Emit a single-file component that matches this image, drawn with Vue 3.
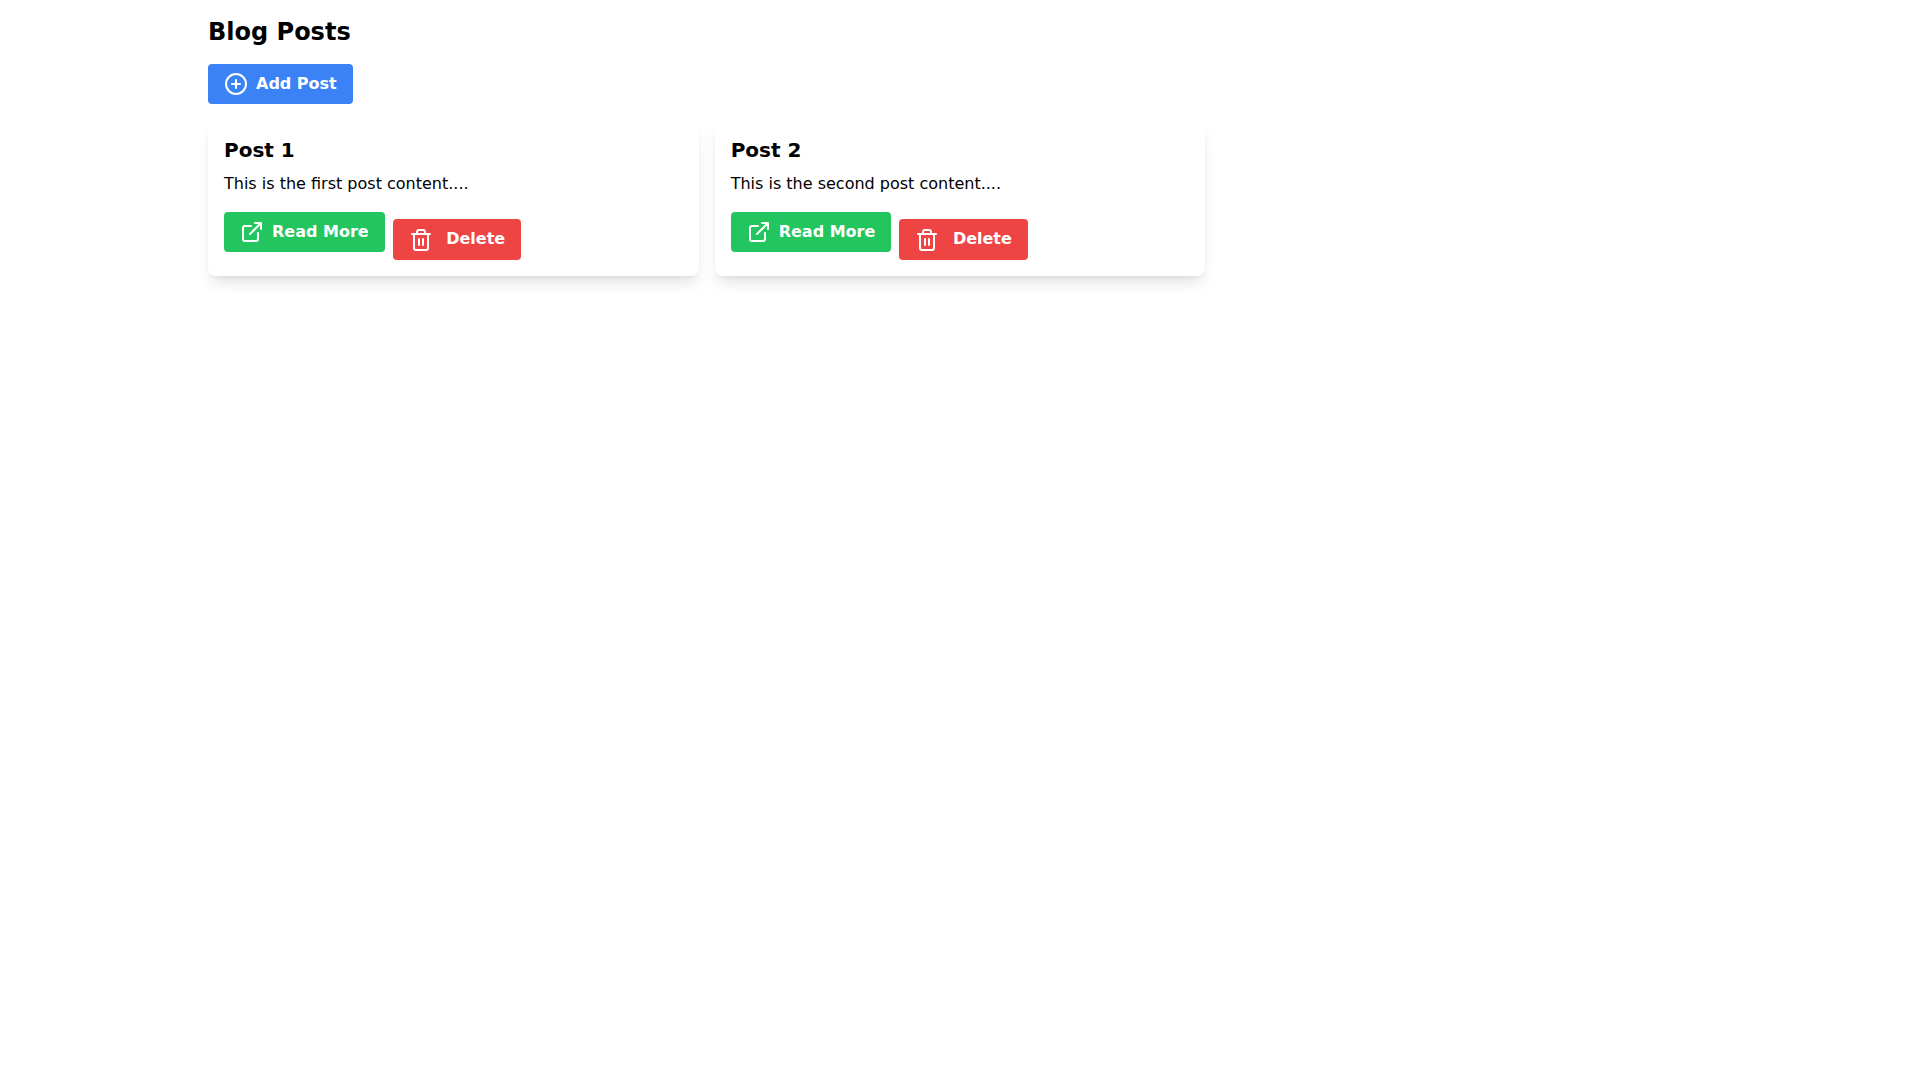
<script setup>
import { ref } from 'vue'

const posts = ref([
  { id: 1, title: 'Post 1', content: 'This is the first post content.' },
  { id: 2, title: 'Post 2', content: 'This is the second post content.' },
])

function addPost() {
  const id = posts.value.reduce((max, post) => Math.max(max, post.id), 0) + 1
  posts.value.push({ id, title: `Post ${id}`, content: 'This is a new post.' })
}

function deletePost(id) {
  posts.value = posts.value.filter((post) => post.id !== id)
}
</script>

<template>
  <main class="container">
    <h1 class="page-title">Blog Posts</h1>

    <button type="button" class="btn btn-flex btn-add" @click="addPost">
      <svg class="icon" viewBox="0 0 24 24" aria-hidden="true">
        <circle cx="12" cy="12" r="10" />
        <path d="M12 8v8M8 12h8" />
      </svg>
      Add Post
    </button>

    <div class="posts">
      <article v-for="post in posts" :key="post.id" class="card">
        <h2 class="card-title">{{ post.title }}</h2>
        <p class="card-text">{{ post.content }}...</p>
        <div class="actions">
          <a :href="`#post-${post.id}`" class="btn btn-flex btn-read">
            <svg class="icon" viewBox="0 0 24 24" aria-hidden="true">
              <path d="M18 13v6a2 2 0 0 1-2 2H5a2 2 0 0 1-2-2V8a2 2 0 0 1 2-2h6" />
              <path d="M15 3h6v6M10 14L21 3" />
            </svg>
            Read More
          </a><button type="button" class="btn btn-delete" @click="deletePost(post.id)">
            <svg class="icon" viewBox="0 0 24 24" aria-hidden="true">
              <path d="M3 6h18" />
              <path d="M19 6v14a2 2 0 0 1-2 2H7a2 2 0 0 1-2-2V6m3 0V4a2 2 0 0 1 2-2h4a2 2 0 0 1 2 2v2" />
              <path d="M10 11v6M14 11v6" />
            </svg>
            Delete
          </button>
        </div>
      </article>
    </div>
  </main>
</template>

<style>
body {
  margin: 0;
  background: #fff;
}
</style>

<style scoped>
.container {
  box-sizing: border-box;
  max-width: 1536px;
  margin: 0 auto;
  padding: 16px;
  color: #000;
  font-family: "DejaVu Sans", sans-serif;
  font-size: 16px;
  line-height: 24px;
}

.page-title {
  margin: 0 0 16px;
  font-size: 24px;
  font-weight: 700;
  line-height: 32px;
}

.btn {
  box-sizing: border-box;
  padding: 8px 16px;
  border: 0;
  border-radius: 4px;
  color: #fff;
  font-family: inherit;
  font-size: 16px;
  font-weight: 700;
  line-height: 24px;
  text-decoration: none;
  cursor: pointer;
}

.btn-flex {
  display: inline-flex;
  align-items: center;
}

.btn-add {
  display: flex;
  background: #3b82f6;
}

.btn-add:hover {
  background: #1d4ed8;
}

.btn-read {
  background: #22c55e;
}

.btn-read:hover {
  background: #15803d;
}

.btn-delete {
  margin-left: 8px;
  background: #ef4444;
}

.btn-delete:hover {
  background: #b91c1c;
}

.icon {
  width: 24px;
  height: 24px;
  margin-right: 8px;
  vertical-align: middle;
  fill: none;
  stroke: currentColor;
  stroke-width: 2;
  stroke-linecap: round;
  stroke-linejoin: round;
}

.posts {
  display: grid;
  grid-template-columns: repeat(3, minmax(0, 1fr));
  gap: 16px;
  margin-top: 16px;
}

.card {
  padding: 16px;
  border-radius: 8px;
  background: #fff;
  box-shadow: 0 10px 15px -3px rgba(0, 0, 0, 0.1), 0 4px 6px -4px rgba(0, 0, 0, 0.1);
}

.card-title {
  margin: 0 0 8px;
  font-size: 20px;
  font-weight: 700;
  line-height: 28px;
}

.card-text {
  margin: 0 0 16px;
}

@media (max-width: 1023px) {
  .posts {
    grid-template-columns: repeat(2, minmax(0, 1fr));
  }
}

@media (max-width: 767px) {
  .posts {
    grid-template-columns: minmax(0, 1fr);
  }
}
</style>
